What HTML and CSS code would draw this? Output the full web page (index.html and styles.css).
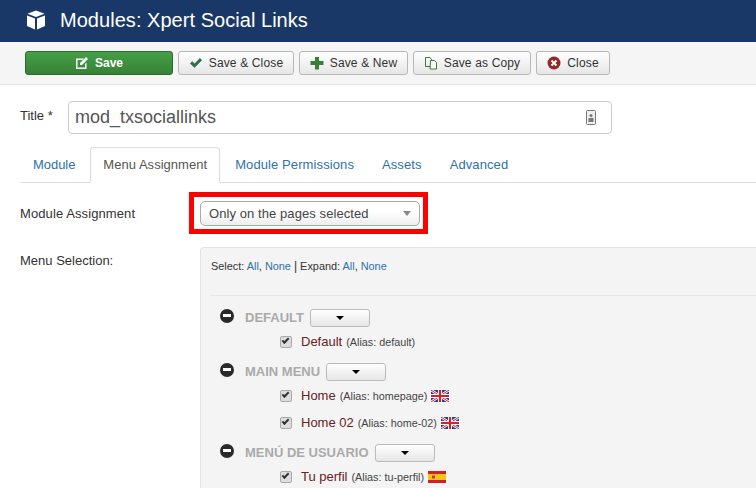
FILE: index.html
```html
<!DOCTYPE html>
<html lang="en">
<head>
<meta charset="utf-8">
<title>Modules: Xpert Social Links</title>
<link rel="stylesheet" href="styles.css">
</head>
<body>
<header class="topbar">
  <svg class="cube" viewBox="0 0 20 20" width="20" height="20"><path fill="#fff" d="M10 0.5 L18.5 3.8 L10 7 L1.5 3.8Z"/><path fill="#fff" d="M1 5.5 L9 8.6 V19.5 L1 16Z M19 5.5 L11 8.6 V19.5 L19 16Z"/></svg>
  <h1 class="page-title">Modules: Xpert Social Links</h1>
</header>
<div class="toolbar">
  <button class="btn btn-save"><svg class="ico" viewBox="0 0 14 14"><path fill="#fff" d="M1 2.5h8L7.5 4H2.5v7.5h7.5V8L11.500 6.500V13H1Z"/><path fill="#fff" d="M5 7 L11 1 L13 3 L7 9 H5Z"/></svg>Save</button>
  <button class="btn btn-close-save"><svg class="ico" viewBox="0 0 14 14"><path fill="#2f6f49" d="M1 7.500 L3.200 5.300 L5.500 7.600 L11 2 L13 4.300 L5.500 11.800Z"/></svg>Save &amp; Close</button>
  <button class="btn btn-new"><svg class="ico" viewBox="0 0 14 14"><path fill="#378137" d="M5 1h4v4h4.500v4H9v4.500H5V9H.5V5H5Z"/></svg>Save &amp; New</button>
  <button class="btn btn-copy"><svg class="ico" viewBox="0 0 14 14"><path fill="none" stroke="#3a7a3a" d="M1.500 1.500h4.500l1.500 2v7h-6Z"/><path fill="#fff" stroke="#3a7a3a" d="M6.500 4.500h4l2 2v6.500h-6.500Z"/></svg>Save as Copy</button>
  <button class="btn btn-cancel"><svg class="ico" viewBox="0 0 14 14"><circle cx="7" cy="7" r="6.500" fill="#8f2b2b"/><path stroke="#fff" stroke-width="2" d="M4.500 4.500l5 5M9.500 4.500l-5 5"/></svg>Close</button>
</div>
<main class="content">
  <div class="title-row">
    <label class="title-label">Title *</label>
    <div class="title-input">
      <span>mod_txsociallinks</span>
      <svg class="badge" viewBox="0 0 10 16" width="10" height="16"><rect x=".5" y=".5" width="9" height="14" rx="1" fill="#eee" stroke="#777"/><rect x="2.500" y="8" width="5" height="4" fill="#777"/><circle cx="5" cy="5.500" r="1.500" fill="#777"/></svg>
    </div>
  </div>
  <nav class="tabs">
    <a class="tab tab-first">Module</a>
    <a class="tab active">Menu Assignment</a>
    <a class="tab tab-wide">Module Permissions</a>
    <a class="tab tab-wide">Assets</a>
    <a class="tab tab-wide">Advanced</a>
  </nav>
  <div class="assign-row">
    <div class="field-label">Module Assignment</div>
    <div class="select-wrap">
      <div class="select"><span>Only on the pages selected</span><i class="caret-grey"></i></div>
    </div>
  </div>
  <div class="selection-row">
    <div class="field-label">Menu Selection:</div>
    <section class="panel">
      <div class="panel-links">Select: <a>All</a>, <a>None</a> <span class="sep">|</span> Expand: <a>All</a>, <a>None</a></div>
      <hr class="rule">
      <div class="menu-head"><i class="minus"></i><b>DEFAULT</b><span class="drop"><i></i></span></div>
      <div class="item"><i class="check"></i><span class="name">Default</span> <small>(Alias: default)</small></div>
      <div class="menu-head"><i class="minus"></i><b>MAIN MENU</b><span class="drop"><i></i></span></div>
      <div class="item"><i class="check"></i><span class="name">Home</span> <small>(Alias: homepage)</small>
        <svg class="flag" viewBox="0 0 18 12"><rect width="18" height="12" fill="#27408b"/><path stroke="#fff" stroke-width="2.500" d="M0 0l18 12M18 0L0 12"/><path stroke="#d8202c" d="M0 0l18 12M18 0L0 12"/><path stroke="#fff" stroke-width="4" d="M9 0v12M0 6h18"/><path stroke="#d8202c" stroke-width="2.200" d="M9 0v12M0 6h18"/></svg></div>
      <div class="item"><i class="check"></i><span class="name">Home 02</span> <small>(Alias: home-02)</small>
        <svg class="flag" viewBox="0 0 18 12"><rect width="18" height="12" fill="#27408b"/><path stroke="#fff" stroke-width="2.500" d="M0 0l18 12M18 0L0 12"/><path stroke="#d8202c" d="M0 0l18 12M18 0L0 12"/><path stroke="#fff" stroke-width="4" d="M9 0v12M0 6h18"/><path stroke="#d8202c" stroke-width="2.200" d="M9 0v12M0 6h18"/></svg></div>
      <div class="menu-head"><i class="minus"></i><b>MENÚ DE USUARIO</b><span class="drop"><i></i></span></div>
      <div class="item"><i class="check"></i><span class="name">Tu perfil</span> <small>(Alias: tu-perfil)</small>
        <svg class="flag" viewBox="0 0 18 12"><rect width="18" height="12" fill="#d0202c"/><rect y="3" width="18" height="6" fill="#f6c315"/><rect x="4" y="4.500" width="3" height="3" fill="#b5452a"/></svg></div>
    </section>
  </div>
</main>
</body>
</html>
```

FILE: styles.css
```css
*, *::before, *::after { box-sizing: border-box; }
html, body { margin: 0; padding: 0; }
body {
  width: 756px;
  height: 488px;
  overflow: hidden;
  background: #fff;
  font-family: "Liberation Sans", Arial, sans-serif;
  font-size: 13px;
  color: #333;
}
.topbar {
  height: 42px;
  background: #1a3867;
  display: flex;
  align-items: center;
  padding: 0 0 2px 26px;
  color: #fff;
}
.cube { margin-right: 14px; }
.page-title { margin: 0; font-size: 20px; font-weight: 400; line-height: 24px; letter-spacing: .04px; }
.toolbar {
  height: 43px;
  background: #f5f5f5;
  border-bottom: 1px solid #e3e3e3;
  display: flex;
  gap: 5px;
  padding: 9px 0 0 25px;
}
.btn {
  height: 24px;
  display: flex;
  align-items: center;
  justify-content: center;
  gap: 6px;
  padding: 0;
  font: 12px/18px "Liberation Sans", Arial, sans-serif;
  letter-spacing: .15px;
  color: #333;
  background: linear-gradient(#fff, #e6e6e6);
  border: 1px solid #b8b8b8;
  border-radius: 3px;
}
.ico { width: 14px; height: 14px; }
.btn-save { width: 148px; color: #fff; font-weight: 700; letter-spacing: 0; background: linear-gradient(#46a046, #378137); border-color: #2d6a2d; }
.btn-close-save { width: 116px; }
.btn-new { width: 109px; }
.btn-copy { width: 118px; }
.btn-cancel { width: 74px; }
.content { padding: 16px 0 0 20px; }
.title-row { display: flex; align-items: center; height: 33px; }
.title-label { width: 48px; margin-top: -4px; line-height: 18px; }
.title-input {
  width: 544px;
  height: 33px;
  display: flex;
  align-items: center;
  justify-content: space-between;
  padding: 0 15px 0 6px;
  border: 1px solid #ccc;
  border-radius: 4px;
  font-size: 18px;
  color: #555;
}
.tabs { display: flex; height: 36px; margin-top: 13px; border-bottom: 1px solid #ddd; }
.tab {
  height: 36px;
  margin-right: 2px;
  padding: 9px 12px 0;
  line-height: 16px;
  letter-spacing: .03px;
  color: #3071a9;
  border: 1px solid transparent;
  border-radius: 4px 4px 0 0;
}
.tab-first { letter-spacing: -.05px; }
.tab-wide { letter-spacing: .1px; }
.active { color: #555; background: #fff; border-color: #ddd #ddd #fff; }
.assign-row { display: flex; align-items: center; margin-top: 18px; height: 25px; }
.field-label { width: 180px; flex: none; line-height: 18px; letter-spacing: .1px; }
.select-wrap { position: relative; }
.select-wrap::after {
  content: "";
  position: absolute;
  left: -11px; top: -9px; width: 239px; height: 42px;
  border: 5px solid #f00;
}
.select {
  width: 220px;
  height: 25px;
  display: flex;
  align-items: center;
  justify-content: space-between;
  padding: 0 8px;
  letter-spacing: .08px;
  color: #444;
  border: 1px solid #aaa;
  border-radius: 5px;
  background: linear-gradient(#fff 40%, #eee);
}
.caret-grey { width: 0; height: 0; border: 4px solid transparent; border-top: 5px solid #888; border-bottom: 0; }
.selection-row { display: flex; margin-top: 21px; }
.selection-row .field-label { margin-top: 5px; letter-spacing: 0; }
.panel {
  flex: none;
  width: 556px;
  height: 241px;
  padding: 11px 0 0 10px;
  background: #f4f4f4;
  border: 1px solid #e3e3e3;
  border-right: 0;
  border-bottom: 0;
  border-radius: 4px 0 0 0;
  font-size: 13px;
}
.panel a { color: #3071a9; }
.panel-links { font-size: 10.900px; line-height: 14px; }
.sep { font-size: 12px; }
.rule { border: 0; border-top: 1px solid #e6e6e6; margin: 22px 0 11px; }
.menu-head { display: flex; align-items: center; height: 21px; margin-top: 6px; padding-left: 9px; }
.menu-head b { color: #aaa; font-size: 13px; margin-left: 11px; }
.minus { position: relative; width: 14px; height: 14px; border-radius: 50%; background: #2a2a2a; margin-top: -4px; }
.minus::after { content: ""; position: absolute; left: 3px; top: 5.500px; width: 8px; height: 3px; background: #fff; }
.drop {
  width: 60px; height: 18px; margin-left: 6px;
  display: flex; align-items: center; justify-content: center;
  border: 1px solid #bbb; border-radius: 3px;
  background: linear-gradient(#fff, #e6e6e6);
}
.drop i { width: 0; height: 0; border: 4px solid transparent; border-top: 4px solid #000; border-bottom: 0; }
.item { display: flex; align-items: center; gap: 4px; height: 27px; padding-left: 69px; white-space: pre; color: #622; }
.item small { font-size: 10.800px; color: #444; }
.check { position: relative; width: 12px; height: 12px; margin-right: 5px; background: #ddd; border: 1px solid #aaa; border-radius: 2px; }
.check::after { content: ""; position: absolute; left: 1px; top: 1px; width: 7px; height: 4px; border-left: 2px solid #333; border-bottom: 2px solid #333; transform: rotate(-45deg); }
.flag { width: 18px; height: 12px; }
```
